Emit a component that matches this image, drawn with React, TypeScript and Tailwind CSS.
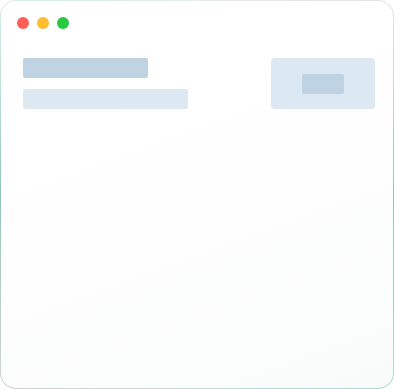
export default function App() {
  return (
    <div className="h-[389px] w-[394px] rounded-[16px] bg-[conic-gradient(from_0deg,#e6ecea,#e3e5e5_45deg,#9fbcb6_90deg,#a9ddd0_135deg,#c8dcd6_180deg,#d2d4d4_225deg,#8fc7b5_270deg,#d3efe6_315deg,#e6ecea)] p-px">
      <div className="flex h-full w-full flex-col rounded-[15px] bg-[linear-gradient(160deg,#ffffff_0%,#fefefe_55%,#f9fbfb_100%)] pl-[16px] pr-[18px] pt-[16px]">
        <div className="flex items-center gap-2">
          <span className="h-3 w-3 rounded-full bg-[#ff5f57]" />
          <span className="h-3 w-3 rounded-full bg-[#febc2e]" />
          <span className="h-3 w-3 rounded-full bg-[#28c840]" />
        </div>
        <div className="mt-[29px] flex items-start justify-between pl-[6px]">
          <div className="flex flex-col gap-[11px]">
            <div className="h-5 w-[125px] rounded-[2px] bg-[#bfd3e3]" />
            <div className="h-5 w-[165px] rounded-[2px] bg-[#dce8f2]" />
          </div>
          <div className="flex h-[51px] w-[104px] items-center justify-center rounded-[4px] bg-[#dce8f2]">
            <div className="h-5 w-[42px] rounded-[2px] bg-[#bfd3e3]" />
          </div>
        </div>
      </div>
    </div>
  );
}
